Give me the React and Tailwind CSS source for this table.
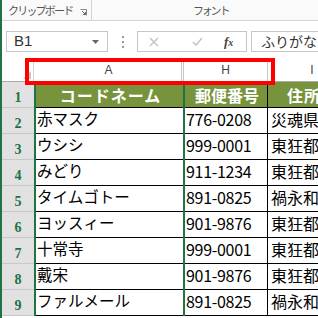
const rows = [
  ['赤マスク', '776-0208', '災魂県'],
  ['ウシシ', '999-0001', '東狂都'],
  ['みどり', '911-1234', '東狂都'],
  ['タイムゴトー', '891-0825', '禍永和'],
  ['ヨッスィー', '901-9876', '東狂都'],
  ['十常寺', '999-0001', '東狂都'],
  ['戴宋', '901-9876', '東狂都'],
  ['ファルメール', '891-0825', '禍永和'],
];

const jp = { fontFamily: '"Noto Sans CJK JP", sans-serif' };

function RowHead({ n }) {
  return (
    <div className="flex h-full w-[32px] shrink-0 items-end justify-center border-b border-[#c8c8c8] bg-[#e1e1e1] pb-[2px] text-[14px] font-bold leading-none text-[#1e7145]" style={{ fontFamily: '"Liberation Serif", serif' }}>
      {n}
    </div>
  );
}

export default function App() {
  return (
    <div className="relative flex h-[318px] w-[318px] overflow-hidden bg-white text-[#444]" style={jp}>
      <div className="w-[2px] shrink-0 bg-[#217346]" />
      <div className="flex min-w-0 flex-1 flex-col">
        {/* ribbon group labels */}
        <div className="flex h-[21px] shrink-0 items-center whitespace-nowrap border-b border-[#d4d4d4] bg-[#fafafa] text-[11px] text-[#555]">
          <span className="ml-[6px] w-[62px] tracking-[-1.8px]">クリップボード</span>
          <svg className="ml-[10px] mt-[4px]" width="7" height="7" viewBox="0 0 7 7">
            <path d="M0.5 0.5H6.5V6.5" fill="none" stroke="#888" />
            <path d="M2 2L5.5 5.5M3 5.5H5.5V3" fill="none" stroke="#666" />
          </svg>
          <div className="ml-[4px] h-full w-px bg-[#d4d4d4]" />
          <span className="ml-[101px] tracking-[-2.2px]">フォント</span>
        </div>

        {/* formula bar */}
        <div className="flex h-[37px] shrink-0 items-start pt-[10px]">
          <div className="ml-[4px] flex h-[21px] w-[102px] items-center border border-[#c6c6c6] pl-[7px] text-[15px] text-[#333]" style={{ fontFamily: '"Liberation Sans", sans-serif' }}>
            B1
            <svg className="ml-auto mr-[8px]" width="7" height="4" viewBox="0 0 7 4">
              <path d="M0 0H7L3.5 4Z" fill="#666" />
            </svg>
          </div>
          <div className="ml-[14px] mt-[5px] flex flex-col gap-[3px]">
            <div className="h-[2px] w-[2px] bg-[#999]" />
            <div className="h-[2px] w-[2px] bg-[#999]" />
            <div className="h-[2px] w-[2px] bg-[#999]" />
          </div>
          <div className="ml-[13px] flex h-[21px] w-[110px] items-center border border-[#c6c6c6]">
            <svg className="ml-[11px]" width="10" height="10" viewBox="0 0 10 10">
              <path d="M1 1L9 9M9 1L1 9" stroke="#c4c4c4" strokeWidth="1.5" />
            </svg>
            <svg className="ml-[33px]" width="11" height="9" viewBox="0 0 11 9">
              <path d="M1 5L4 8L10 1" fill="none" stroke="#c4c4c4" strokeWidth="1.5" />
            </svg>
            <span className="ml-[21px] text-[13px] font-bold italic text-[#444]" style={{ fontFamily: '"Liberation Serif", serif' }}>
              f<span className="text-[10px]">x</span>
            </span>
          </div>
          <div className="ml-[4px] flex h-[21px] min-w-0 flex-1 items-center overflow-hidden whitespace-nowrap border border-r-0 border-[#c6c6c6] pl-[9px] text-[14px] text-[#333]">
            ふりがな
          </div>
        </div>

        {/* column headers */}
        <div className="flex h-[24px] shrink-0 border-b border-[#ababab] text-[12px]" style={{ fontFamily: '"Liberation Sans", sans-serif' }}>
          <div className="relative w-[32px] shrink-0 border-r border-[#d4d4d4]">
            <svg className="absolute bottom-[2px] right-[2px]" width="8" height="8" viewBox="0 0 8 8">
              <path d="M8 0V8H0Z" fill="#c8c8c8" />
            </svg>
          </div>
          <div className="flex w-[148px] shrink-0 items-center justify-center border-r border-[#c6c6c6] pl-[2px]">A</div>
          <div className="w-[2px] shrink-0 border-r border-[#c6c6c6]" />
          <div className="flex w-[84px] shrink-0 items-center justify-center border-r border-[#c6c6c6]">H</div>
          <div className="flex w-[88px] shrink-0 items-center justify-center">I</div>
        </div>

        {/* header row */}
        <div className="flex h-[26px] shrink-0 whitespace-nowrap">
          <RowHead n={1} />
          <div className="w-[2px] shrink-0 bg-[#217346]" />
          <div className="flex w-[147px] shrink-0 items-center justify-center border-b border-black bg-[#77933c] pl-[2px] text-[16px] font-bold tracking-[1px] text-white">
            コードネーム
          </div>
          <div className="w-[2px] shrink-0 bg-[#217346]" />
          <div className="flex w-[83px] shrink-0 items-center justify-center border-b border-r border-black bg-[#77933c] pl-[2px] text-[16px] font-bold text-white">
            郵便番号
          </div>
          <div className="flex w-[88px] shrink-0 items-center overflow-hidden border-b border-black bg-[#77933c] pl-[19px] text-[16px] font-bold tracking-[1px] text-white">
            住所
          </div>
        </div>

        {rows.map((r, i) => (
          <div key={i} className="flex h-[26px] shrink-0 whitespace-nowrap">
            <RowHead n={i + 2} />
            <div className="w-[2px] shrink-0 bg-[#217346]" />
            <div className="flex w-[147px] shrink-0 items-center border-b border-black pb-[3px] pl-[1px] text-[15.5px] text-black">
              {r[0]}
            </div>
            <div className="w-[2px] shrink-0 bg-[#217346]" />
            <div className="flex w-[83px] shrink-0 items-center border-b border-r border-black pb-[3px] pl-[1px] text-[16px] text-black" style={{ letterSpacing: '-0.3px' }}>
              {r[1]}
            </div>
            <div className="flex w-[88px] shrink-0 items-center overflow-hidden border-b border-black pb-[3px] pl-[3px] text-[16px] text-black">
              {r[2]}
            </div>
          </div>
        ))}
      </div>

      {/* red annotation box */}
      <div className="absolute left-[25px] top-[58px] h-[27px] w-[250px] border-[4px] border-[#ff0000]" />
    </div>
  );
}
